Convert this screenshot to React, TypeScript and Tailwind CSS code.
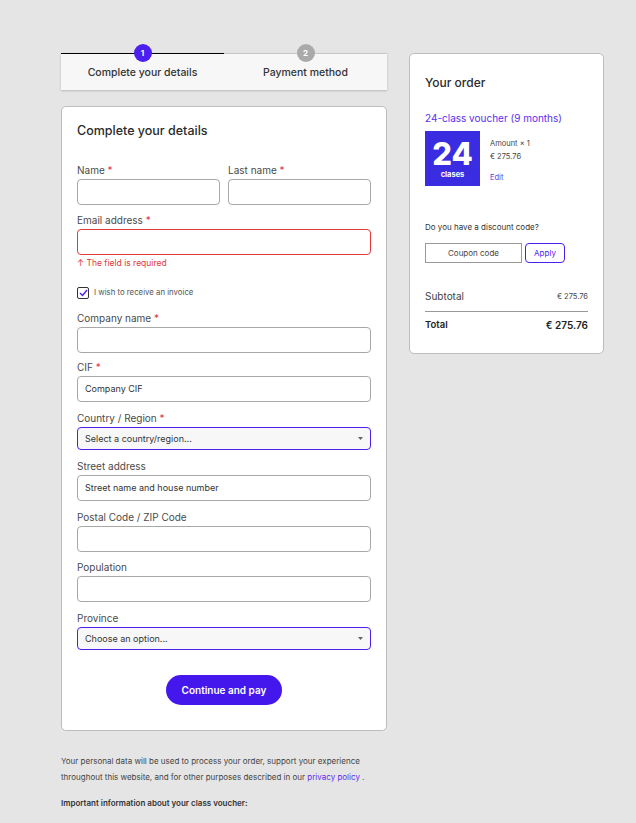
import React from "react";

const font = { fontFamily: "Inter, 'Noto Sans', sans-serif" };

function Label({ children, req }: { children: React.ReactNode; req?: boolean }) {
  return (
    <div className="text-[10px] text-[#4a4a4a] leading-[10px] mb-[4px]">
      {children}
      {req && <span className="text-[#e03a3a]"> *</span>}
    </div>
  );
}

function Input({ placeholder, error }: { placeholder?: string; error?: boolean }) {
  return (
    <div
      className={`h-[26px] rounded-[4px] border bg-white flex items-center px-[7px] text-[9px] text-[#333] ${
        error ? "border-[#e03a3a]" : "border-[#a8a8a8]"
      }`}
    >
      {placeholder}
    </div>
  );
}

function Select({ text }: { text: string }) {
  return (
    <div className="h-[23px] rounded-[4px] border border-[#4a1ff0] bg-[#f7f7f7] flex items-center justify-between px-[7px] text-[9px] text-[#333]">
      <span>{text}</span>
      <svg width="5" height="3" viewBox="0 0 5 3">
        <path d="M0 0 L5 0 L2.5 3 Z" fill="#666" />
      </svg>
    </div>
  );
}

export default function App() {
  return (
    <div className="min-h-[823px] w-[636px] bg-[#e5e5e5] overflow-hidden" style={font}>
      <div className="flex gap-[22px] pl-[61px] pt-[44px]">
        {/* Left column */}
        <div className="w-[326px] flex flex-col">
          {/* Stepper */}
          <div className="relative h-[37px] mt-[9px] bg-[#f7f7f7] shadow-[0_1px_2px_rgba(0,0,0,0.2)] flex">
            <div className="absolute left-0 top-0 w-1/2 h-[1px] bg-black" />
            <div className="absolute right-0 top-0 w-1/2 h-[1px] bg-[#c8c8c8]" />
            <div className="relative w-1/2 flex justify-center">
              <div className="absolute top-[-9px] left-1/2 -translate-x-1/2 w-[18px] h-[18px] rounded-full bg-[#4a1ff0] text-white text-[8px] font-bold flex items-center justify-center">
                1
              </div>
              <div className="mt-[12px] text-[10.5px] font-medium text-[#333]">Complete your details</div>
            </div>
            <div className="relative w-1/2 flex justify-center">
              <div className="absolute top-[-9px] left-1/2 -translate-x-1/2 w-[18px] h-[18px] rounded-full bg-[#aaaaaa] text-white text-[8px] font-bold flex items-center justify-center">
                2
              </div>
              <div className="mt-[12px] text-[10.5px] font-medium text-[#333]">Payment method</div>
            </div>
          </div>

          {/* Form card */}
          <div className="mt-[16px] h-[625px] bg-white border border-[#bdbdbd] rounded-[5px] px-[15px] pt-[16px]">
            <div className="text-[12.5px] font-medium text-[#2a2a2a] leading-[16px]">Complete your details</div>

            <div className="mt-[26px] flex gap-[8px]">
              <div className="flex-1">
                <Label req>Name</Label>
                <Input />
              </div>
              <div className="flex-1">
                <Label req>Last name</Label>
                <Input />
              </div>
            </div>

            <div className="mt-[10px]">
              <Label req>Email address</Label>
              <Input error />
              <div className="mt-[3px] text-[8.5px] text-[#e03a3a] leading-[10px]">↑ The field is required</div>
            </div>

            <div className="mt-[19px] flex items-center gap-[5px]">
              <div className="w-[12px] h-[12px] rounded-[2px] border border-[#333] flex items-center justify-center">
                <svg width="9" height="8" viewBox="0 0 9 8">
                  <path d="M1 4 L3.5 6.5 L8 1" stroke="#4a1ff0" strokeWidth="1.4" fill="none" />
                </svg>
              </div>
              <span className="text-[7.8px] text-[#555]">I wish to receive an invoice</span>
            </div>

            <div className="mt-[14px]">
              <Label req>Company name</Label>
              <Input />
            </div>
            <div className="mt-[9px]">
              <Label req>CIF</Label>
              <Input placeholder="Company CIF" />
            </div>
            <div className="mt-[11px]">
              <Label req>Country / Region</Label>
              <Select text="Select a country/region..." />
            </div>
            <div className="mt-[11px]">
              <Label>Street address</Label>
              <Input placeholder="Street name and house number" />
            </div>
            <div className="mt-[11px]">
              <Label>Postal Code / ZIP Code</Label>
              <Input />
            </div>
            <div className="mt-[10px]">
              <Label>Population</Label>
              <Input />
            </div>
            <div className="mt-[11px]">
              <Label>Province</Label>
              <Select text="Choose an option..." />
            </div>

            <div className="mt-[25px] flex justify-center">
              <button className="w-[116px] h-[30px] rounded-full bg-[#4417ec] text-white text-[10px] font-semibold">
                Continue and pay
              </button>
            </div>
          </div>

          <p className="mt-[22px] text-[8px] text-[#444] leading-[16px]">
            Your personal data will be used to process your order, support your experience throughout this website, and
            for other purposes described in our <a className="text-[#5a2ef0]">privacy policy</a> .
          </p>
          <div className="mt-[12px] text-[8px] font-semibold text-[#333]">Important information about your class voucher:</div>
        </div>

        {/* Right column */}
        <div className="w-[195px] mt-[9px] self-start bg-white border border-[#bdbdbd] rounded-[5px] px-[15px] pt-[20px] pb-[20px]">
          <div className="text-[12px] font-medium text-[#2a2a2a]">Your order</div>
          <div className="mt-[19px] text-[10px] text-[#5a2ef0]">24-class voucher (9 months)</div>
          <div className="mt-[5px] flex gap-[10px]">
            <div className="w-[55px] h-[55px] bg-[#3a2ce0] flex flex-col items-center justify-center">
              <div className="text-white text-[31px] font-extrabold leading-[32px]">24</div>
              <div className="text-white text-[7.5px] font-bold leading-[9px]">clases</div>
            </div>
            <div className="pt-[6px] text-[7.5px] text-[#444] leading-[13px]">
              <div>Amount × 1</div>
              <div>€ 275.76</div>
              <div className="mt-[8px] text-[#5a2ef0]">Edit</div>
            </div>
          </div>
          <div className="mt-[35px] text-[8px] text-[#333]">Do you have a discount code?</div>
          <div className="mt-[10px] flex gap-[3px]">
            <div className="w-[97px] h-[20px] border border-[#999] flex items-center justify-center text-[8px] text-[#444]">
              Coupon code
            </div>
            <div className="w-[40px] h-[20px] border border-[#4a1ff0] rounded-[4px] flex items-center justify-center text-[8px] text-[#4a1ff0]">
              Apply
            </div>
          </div>
          <div className="mt-[26px] flex justify-between items-center text-[#444]">
            <span className="text-[10px]">Subtotal</span>
            <span className="text-[7.5px]">€ 275.76</span>
          </div>
          <div className="mt-[7px] h-[1px] bg-[#999]" />
          <div className="mt-[6px] flex justify-between items-center text-[#222] font-semibold">
            <span className="text-[9.5px]">Total</span>
            <span className="text-[10px]">€ 275.76</span>
          </div>
        </div>
      </div>
    </div>
  );
}
